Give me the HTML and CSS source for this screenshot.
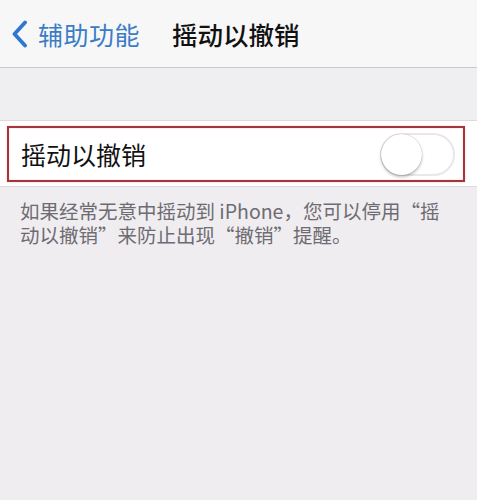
FILE: index.html
```html
<!DOCTYPE html>
<html lang="zh">
<head>
<meta charset="utf-8">
<link rel="stylesheet" href="styles.css">
</head>
<body>
<div class="page">
  <header class="nav">
    <div class="back">
      <svg class="chev" width="20" height="28" viewBox="0 0 20 28"><path d="M15 2.5 L4.5 14 L15 25.5" fill="none" stroke="#2f78cf" stroke-width="3.8" stroke-linecap="round" stroke-linejoin="round"/></svg>
      <span class="back-label">辅助功能</span>
    </div>
    <div class="title">摇动以撤销</div>
  </header>
  <div class="spacer"></div>
  <section class="group">
    <div class="cell">
      <div class="highlight">
        <span class="cell-label">摇动以撤销</span>
        <span class="toggle"><span class="knob"></span></span>
      </div>
    </div>
  </section>
  <p class="footer">如果经常无意中摇动到 iPhone，您可以停用“摇动以撤销”来防止出现“撤销”提醒。</p>
</div>
</body>
</html>
```
FILE: styles.css
```css
html, body {
  margin: 0;
  padding: 0;
}
body {
  background: #f0edf0;
  font-family: "Noto Sans CJK SC", "Noto Sans", sans-serif;
}
.page {
  width: 477px;
  height: 500px;
  overflow: hidden;
  background: #f0edf0;
}
.nav {
  height: 68px;
  box-sizing: border-box;
  background: #f8f7f8;
  border-bottom: 1px solid #c9c8cc;
  display: flex;
  align-items: center;
  padding-left: 10px;
}
.back {
  display: flex;
  align-items: center;
  gap: 8px;
  width: 162px;
}
.chev {
  display: block;
  margin-top: 1px;
}
.back-label {
  color: #3a7cc6;
  font-size: 25px;
  line-height: 30px;
  letter-spacing: 0.5px;
}
.title {
  color: #111;
  font-size: 25.5px;
  font-weight: 500;
  line-height: 30px;
}
.spacer {
  height: 52px;
  background: #efeef0;
}
.group {
  background: #fff;
  border-top: 1px solid #dcdadd;
  border-bottom: 1px solid #dcdadd;
  padding: 5px 12px 4px 7px;
}
.highlight {
  height: 56px;
  box-sizing: border-box;
  border: 2px solid #a2363a;
  box-shadow: inset 0 0 2px #f2c6c8, 0 0 2px #f2c6c8;
  display: flex;
  align-items: center;
  justify-content: space-between;
  padding: 0 8px 0 12px;
}
.cell-label {
  font-size: 25px;
  line-height: 30px;
  color: #111;
}
.toggle {
  width: 75px;
  height: 43px;
  box-sizing: border-box;
  border: 2px solid #e8e8ea;
  border-radius: 22px;
  background: #fff;
  position: relative;
}
.knob {
  position: absolute;
  left: -1px;
  top: -1px;
  width: 41px;
  height: 41px;
  border-radius: 50%;
  background: #fff;
  box-shadow: 0 2px 3px rgba(0,0,0,0.25), 0 0 1px rgba(0,0,0,0.35);
}
.footer {
  margin: 12px 0 0;
  padding: 0 30px 0 20px;
  font-size: 19.5px;
  line-height: 24px;
  color: #6d6c72;
}
```
